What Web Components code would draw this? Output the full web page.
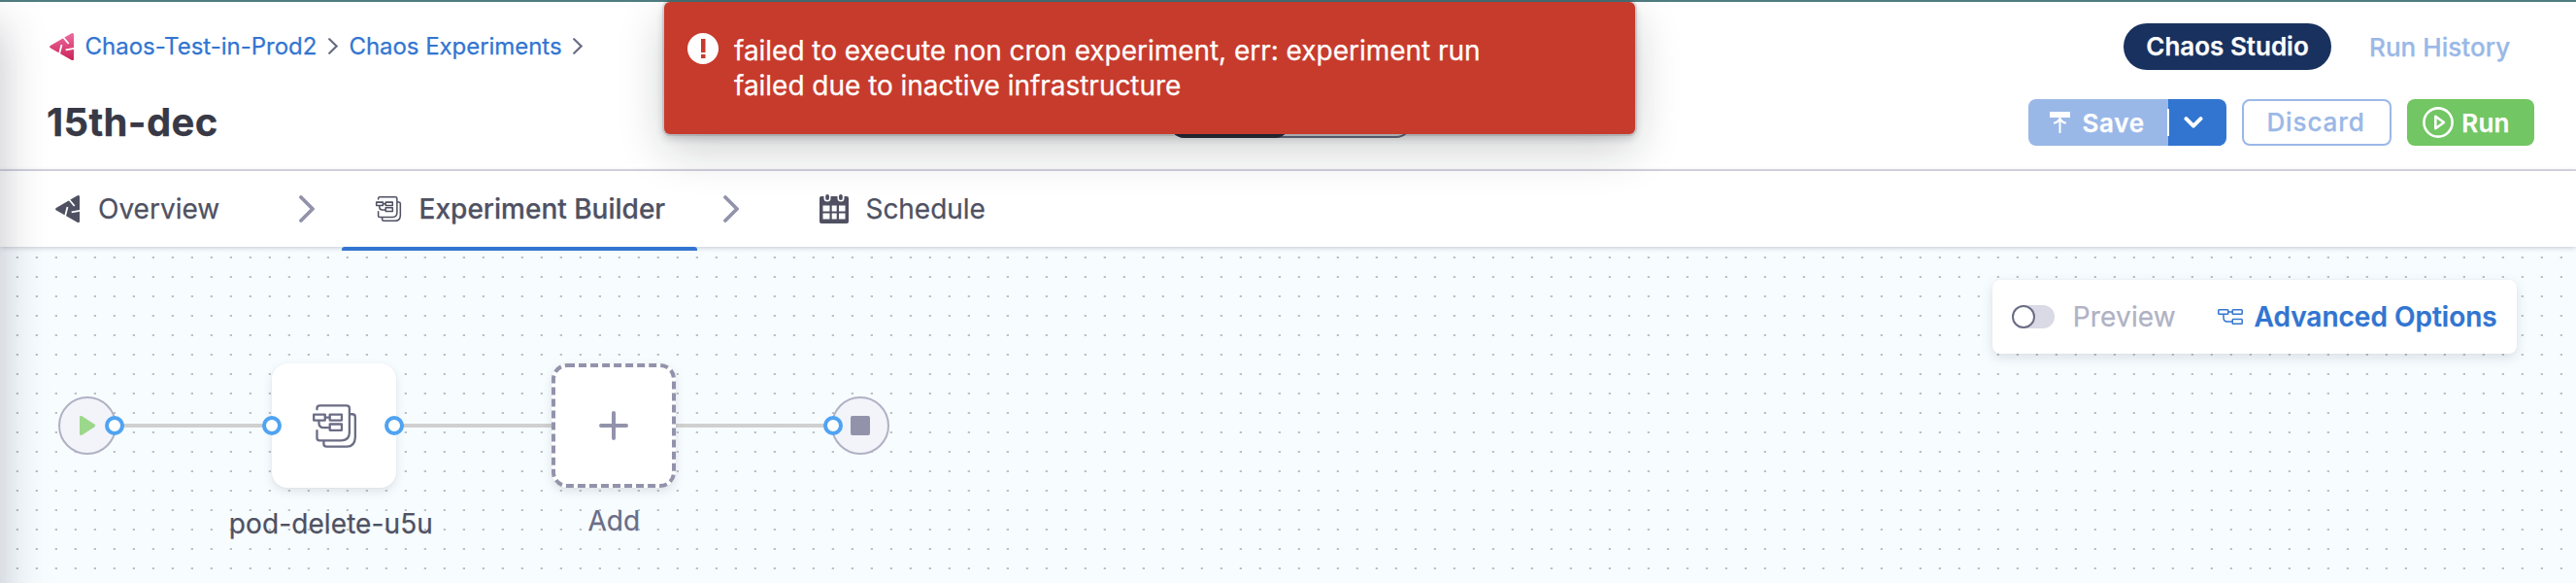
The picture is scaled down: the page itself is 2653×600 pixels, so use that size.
<!DOCTYPE html>
<html lang="en">
<head>
<meta charset="utf-8">
<title>15th-dec | Chaos Studio</title>
<style>
html,body{margin:0;height:100%;overflow:hidden;background:#fff}
body{font-family:Inter,"Liberation Sans",sans-serif}
</style>
</head>
<body>
<chaos-studio-app></chaos-studio-app>

<template id="t-app">
<style>
:host{display:flex;flex-direction:column;position:relative;height:600px;overflow:hidden;color:#4f5162;font-size:28px;-webkit-text-stroke:.25px currentColor}
.strip{flex:none;height:2px;background:#4f7c80}
page-header,step-tabs{flex:none}
flow-canvas{flex:1}
.nav-shadow{position:absolute;left:-100px;width:100px;top:26px;bottom:-80px;box-shadow:0 0 48px rgba(40,41,61,.28);z-index:5;pointer-events:none}
</style>
<div class="strip"></div>
<page-header></page-header>
<step-tabs></step-tabs>
<flow-canvas></flow-canvas>
<div class="nav-shadow"></div>
<error-toast>failed to execute non cron experiment, err: experiment run failed due to inactive infrastructure</error-toast>
</template>

<template id="t-header">
<style>
:host{display:flex;flex-direction:column;gap:30px;box-sizing:border-box;height:174px;padding:22px 43px 0 48px;background:#fff;border-bottom:2px solid #d9dae5}
.row{display:flex;align-items:center;height:48px}
.crumbs{display:flex;align-items:center;padding-left:3px;margin-top:-1px;font-size:24px;line-height:32px;color:#3275d1;white-space:nowrap}
.crumbs .a{margin-left:11.5px}
.crumbs .c1{margin:0 11px 0 12px}
.crumbs .c2{margin-left:11px}
.crumbs .e{letter-spacing:-.05px}
.sp{flex:1}
.pill{width:214px;height:48px;border-radius:24px;background:#18315f;color:#fff;font-weight:600;font-size:26px;line-height:47px;text-align:center}
.hist{width:170px;padding-left:39px;color:#9ab8e7;font-weight:500;font-size:26px;line-height:47px;white-space:nowrap;letter-spacing:.05px}
h1{margin:0;width:1156px;font-size:40px;line-height:48px;font-weight:700;letter-spacing:.35px;color:#383946}
view-toggle{flex:none}
action-buttons{flex:none}
svg{display:block;flex:none}
</style>
<div class="row">
<div class="crumbs">
<chaos-logo tone="pink"></chaos-logo>
<span class="a">Chaos-Test-in-Prod2</span>
<svg class="c1" width="10" height="17" viewBox="0 0 10 17" fill="none" stroke="#6b6d85" stroke-width="2.2" stroke-linecap="round"><path d="M1.2 1.2 8.6 8.5 1.2 15.8"/></svg>
<span class="e">Chaos Experiments</span>
<svg class="c2" width="10" height="17" viewBox="0 0 10 17" fill="none" stroke="#6b6d85" stroke-width="2.2" stroke-linecap="round"><path d="M1.2 1.2 8.6 8.5 1.2 15.8"/></svg>
</div>
<div class="sp"></div>
<div class="pill">Chaos Studio</div>
<div class="hist">Run History</div>
</div>
<div class="row">
<h1>15th-dec</h1>
<view-toggle></view-toggle>
<div class="sp"></div>
<action-buttons></action-buttons>
</div>
</template>

<template id="t-toggle">
<style>
:host{display:block;box-sizing:border-box;width:250px;height:32px;border:2px solid #6b6d85;border-radius:16px}
div{width:125px;height:32px;margin:-2px;border-radius:16px;background:#2c2d3b}
</style>
<div></div>
</template>

<template id="t-actions">
<style>
:host{display:flex;height:48px;font-size:26px;line-height:47px;font-weight:600;color:#fff}
.save{display:flex;align-items:center;box-sizing:border-box;width:144px;padding-left:21.5px;background:#9ab8e7;border-radius:8px 0 0 8px}
.save span{margin-left:13px;letter-spacing:.7px}
.caret{position:relative;display:flex;align-items:center;box-sizing:border-box;width:60px;padding-left:16px;background:#3275d1;border-radius:0 8px 8px 0}
.caret::before{content:"";position:absolute;left:-1px;top:10px;width:2px;height:28px;background:#fff}
.discard{box-sizing:border-box;width:154px;margin:0 16px;border:2px solid #9ab8e7;border-radius:8px;padding-left:23.4px;line-height:43px;color:#9ab8e7;font-weight:550;letter-spacing:.9px}
.run{display:flex;align-items:center;box-sizing:border-box;width:131px;padding-left:16px;background:#72c663;border-radius:8px}
.run span{margin-left:8.3px;letter-spacing:.2px}
svg{display:block;flex:none}
</style>
<div class="save"><svg width="21" height="22" viewBox="0 0 21 22" fill="none" stroke="#fff"><path d="M0 0H21V6H0Z" fill="#fff" stroke="none"/><path d="M10.5 8V22" stroke-width="2"/><path d="M4.2 11.8Q9.5 10.5 10.5 6.5 11.5 10.5 16.800 11.800" stroke-width="2.2"/></svg><span>Save</span></div>
<div class="caret"><svg width="20" height="12" viewBox="0 0 20 12" fill="none" stroke="#fff" stroke-width="4" stroke-linecap="round" stroke-linejoin="round"><path d="M2.500 2.200 10 9.600 17.500 2.200"/></svg></div>
<div class="discard">Discard</div>
<div class="run"><svg width="32" height="32" viewBox="0 0 32 32" fill="none" stroke="#fff" stroke-width="2.6" stroke-linejoin="round"><circle cx="16" cy="16" r="14.600"/><path d="M13.300 9.800V22.200L22 16Z"/></svg><span>Run</span></div>
</template>

<template id="t-tabs">
<style>
:host{display:flex;align-items:stretch;box-sizing:border-box;height:78px;background:#fff;position:relative;z-index:2;box-shadow:0 1px 5px rgba(40,41,61,.24);line-height:78px;white-space:nowrap}
.tab{display:flex;align-items:center;box-sizing:border-box}
.o{width:308px;padding-left:57px;gap:19px}
.b{position:relative;width:366px;margin-left:28px;padding-left:35px;gap:18.600px;font-weight:500}
.b::after{content:"";position:absolute;left:0;right:0;bottom:-4px;height:4px;background:#3275d1;border-radius:3px 3px 0 0}
.s{margin-left:83px;gap:17.500px;letter-spacing:-.05px}
.chev{align-self:center;flex:none;display:block}
.b+.chev{margin-left:27px}
svg{display:block}
</style>
<div class="tab o"><chaos-logo></chaos-logo><span>Overview</span></div>
<svg class="chev" width="16" height="28" viewBox="0 0 16 28" fill="none" stroke="#9293ab" stroke-width="3.800" stroke-linecap="round" stroke-linejoin="round"><path d="M2 2 14 14 2 26"/></svg>
<div class="tab b"><experiment-icon size="26" weight="8"></experiment-icon><span>Experiment Builder</span></div>
<svg class="chev" width="16" height="28" viewBox="0 0 16 28" fill="none" stroke="#9293ab" stroke-width="3.800" stroke-linecap="round" stroke-linejoin="round"><path d="M2 2 14 14 2 26"/></svg>
<div class="tab s"><svg width="30" height="30" viewBox="0 0 30 30"><rect y="2" width="30" height="28" rx="2" fill="#4f5162"/><g fill="#fff"><path d="M3.500 11.500h7v6h-7zM12.700 11.500h5v6h-5zM20 11.500h6.500v6H20zM3.500 19.500h7v6h-7zM12.700 19.500h5v6h-5zM20 19.500h6.500v6H20z"/><rect x="4.500" y="-2" width="7" height="9.500" rx="3.500"/><rect x="18.500" y="-2" width="7" height="9.500" rx="3.500"/></g><g fill="#4f5162"><rect x="6.200" y="0" width="3.800" height="6" rx="1.900"/><rect x="20" y="0" width="3.800" height="6" rx="1.900"/></g></svg><span>Schedule</span></div>
</template>

<template id="t-logo">
<style>:host{display:block;width:25px;height:28px;flex:none}svg{display:block}</style>
<svg width="25" height="28" viewBox="0 0 25 28"><defs><linearGradient id="g" x1="0" y1="0" x2="0" y2="1"><stop offset="0" stop-color="#ee6ca0"/><stop offset="1" stop-color="#c92356"/></linearGradient></defs><path class="body" fill="#4f5162" d="M.6 15.200Q-.4 14 .8 13L22.300.4Q25-.8 25 1.500V26.500Q25 28.800 22.500 27.700Z"/><path d="M13 3 19.700 11M12.500 12 10.200 21M16.700 17.300 25.500 15.700" fill="none" stroke="#fff" stroke-width="1.800"/></svg>
</template>

<template id="t-exp">
<style>:host{display:block;flex:none}svg{display:block;overflow:visible}</style>
<svg viewBox="0 0 135 136" fill="none" stroke="currentColor" stroke-linecap="round" stroke-linejoin="round"><path d="M13 16V13Q13 4 22 4H105Q114 4 114 13V88Q114 112 90 113H21Q13 113 13 105V82M117 31H123Q132 31 132 40V104Q130 132 106 132H43Q34 132 34 124V116M3 32H38V50H3ZM53 32H90V50H53ZM53 62H90V81H53ZM38 41H53M19 50V58Q19 73 34 73H53"/></svg>
</template>

<template id="t-canvas">
<style>
:host{display:block;position:relative;background:#f7fcff;overflow:hidden}
.grid{position:absolute;inset:0;width:100%;height:100%}
.n{position:absolute;box-sizing:border-box}
.line{height:4px;background:#d0d0d0;top:182px}
.circ{width:60px;height:60px;border:2px solid #b0b1c4;border-radius:50%;background:#f3f3fa;top:154px}
.card{display:grid;place-items:center;width:128px;height:128px;border-radius:16px;background:#fff;top:120px;box-shadow:0 4px 10px rgba(96,97,112,.16),0 0 2px rgba(40,41,61,.05);color:#6b6d85}
.port{width:20px;height:20px;border:4px solid #4fa3f2;border-radius:50%;background:#fff;top:174px}
.lbl{line-height:34px;white-space:nowrap}
svg{display:block}
options-panel{position:absolute;left:2052px;top:34px}
</style>
<svg class="grid"><defs><pattern id="d" width="20" height="20" patternUnits="userSpaceOnUse"><rect x="16.700" y="10" width="2.300" height="2" fill="#bcc1c5"/></pattern></defs><rect width="100%" height="100%" fill="url(#d)"/></svg>
<div class="n line" style="left:118px;width:162px"></div>
<div class="n line" style="left:406px;width:164px"></div>
<div class="n line" style="left:694px;width:164px"></div>
<div class="n circ" style="left:60px"></div>
<svg class="n" style="left:82px;top:174px" width="17" height="20" viewBox="0 0 17 20"><path d="M0 1.500Q0-.6 2.500.3L15.200 8.500Q17 10 15.200 11.500L2.500 19.700Q0 20.600 0 18.500Z" fill="#9bd88c"/></svg>
<div class="n card" style="left:280px"><experiment-icon size="45" weight="7"></experiment-icon></div>
<div class="n card" style="left:568px"></div>
<svg class="n" style="left:568px;top:120px" width="128" height="128" viewBox="0 0 128 128" fill="none" stroke="#9293ab" stroke-width="4"><rect x="2" y="2" width="124" height="124" rx="14" stroke-dasharray="8 4.030"/><path d="M64 51V77M51 64H77" stroke-linecap="round"/></svg>
<div class="n circ" style="left:856px"></div>
<div class="n" style="left:876px;top:174px;width:20px;height:20px;border-radius:2px;background:#9293ab"></div>
<div class="n port" style="left:108px"></div>
<div class="n port" style="left:270px"></div>
<div class="n port" style="left:396px"></div>
<div class="n port" style="left:848px"></div>
<div class="n lbl" style="left:235.800px;top:268px;letter-spacing:.1px">pod-delete-u5u</div>
<div class="n lbl" style="left:605.500px;top:265px;color:#6b6d85">Add</div>
<options-panel></options-panel>
</template>

<template id="t-panel">
<style>
:host{display:flex;align-items:center;box-sizing:border-box;width:540px;height:76px;padding-left:20px;border-radius:8px;background:#fff;box-shadow:0 4px 12px rgba(96,97,112,.18),0 0 2px rgba(40,41,61,.05);white-space:nowrap;line-height:34px}
.sw{width:44px;height:24px;border-radius:12px;background:#d9dae5}
.sw::before{content:"";display:block;box-sizing:border-box;width:24px;height:24px;border-radius:50%;background:#fff;border:2px solid #6b6d85}
.pv{width:149.300px;margin-left:18.700px;color:#b0b1c4;letter-spacing:.18px}
.adv{margin-left:11.500px;color:#3275d1;font-weight:600}
svg{display:block;flex:none}
.sw,.pv{flex:none;box-sizing:border-box}
</style>
<div class="sw"></div><span class="pv">Preview</span>
<svg width="26" height="16" viewBox="0 0 26 16" fill="none" stroke="#3275d1" stroke-width="1.500"><rect x=".75" y=".75" width="10" height="4.600" rx=".8"/><rect x="15.200" y=".75" width="10" height="4.600" rx=".8"/><rect x="15.200" y="10.600" width="10" height="4.600" rx=".8"/><path d="M10.800 3H15.200M6 5.400V9Q6 13 10 13H15.200"/></svg>
<span class="adv">Advanced Options</span>
</template>

<template id="t-toast">
<style>
:host{position:absolute;left:684px;top:2px;z-index:10;display:flex;align-items:flex-start;box-sizing:border-box;width:1000px;height:136px;padding:32px 100px 0 23.500px;border-radius:6px;background:#c73b2c;color:#fff;line-height:36px;letter-spacing:-.03px;box-shadow:0 0 0 2px rgba(16,22,26,.1),0 4px 8px rgba(16,22,26,.2),0 16px 48px rgba(16,22,26,.2)}
svg{display:block;flex:none;margin-right:16.500px}
</style>
<svg width="32" height="32" viewBox="0 0 32 32"><circle cx="16" cy="16" r="16" fill="#fff"/><path d="M14 6h4.500v14H14zM14 22h4.500v4H14z" fill="#c73b2c"/></svg>
<div><slot></slot></div>
</template>

<script>
function define(name, templateId, setup) {
  customElements.define(name, class extends HTMLElement {
    constructor() {
      super();
      this.attachShadow({ mode: 'open' }).appendChild(document.getElementById(templateId).content.cloneNode(true));
    }
    connectedCallback() {
      if (setup) setup(this, this.shadowRoot);
    }
  });
}
define('chaos-logo', 't-logo', (el, root) => {
  if (el.getAttribute('tone') === 'pink') root.querySelector('.body').setAttribute('fill', 'url(#g)');
});
define('experiment-icon', 't-exp', (el, root) => {
  const svg = root.querySelector('svg');
  svg.setAttribute('width', el.getAttribute('size'));
  svg.setAttribute('height', el.getAttribute('size'));
  svg.setAttribute('stroke-width', el.getAttribute('weight'));
});
define('view-toggle', 't-toggle');
define('action-buttons', 't-actions');
define('page-header', 't-header');
define('step-tabs', 't-tabs');
define('options-panel', 't-panel');
define('flow-canvas', 't-canvas');
define('error-toast', 't-toast');
define('chaos-studio-app', 't-app');
</script>
</body>
</html>
